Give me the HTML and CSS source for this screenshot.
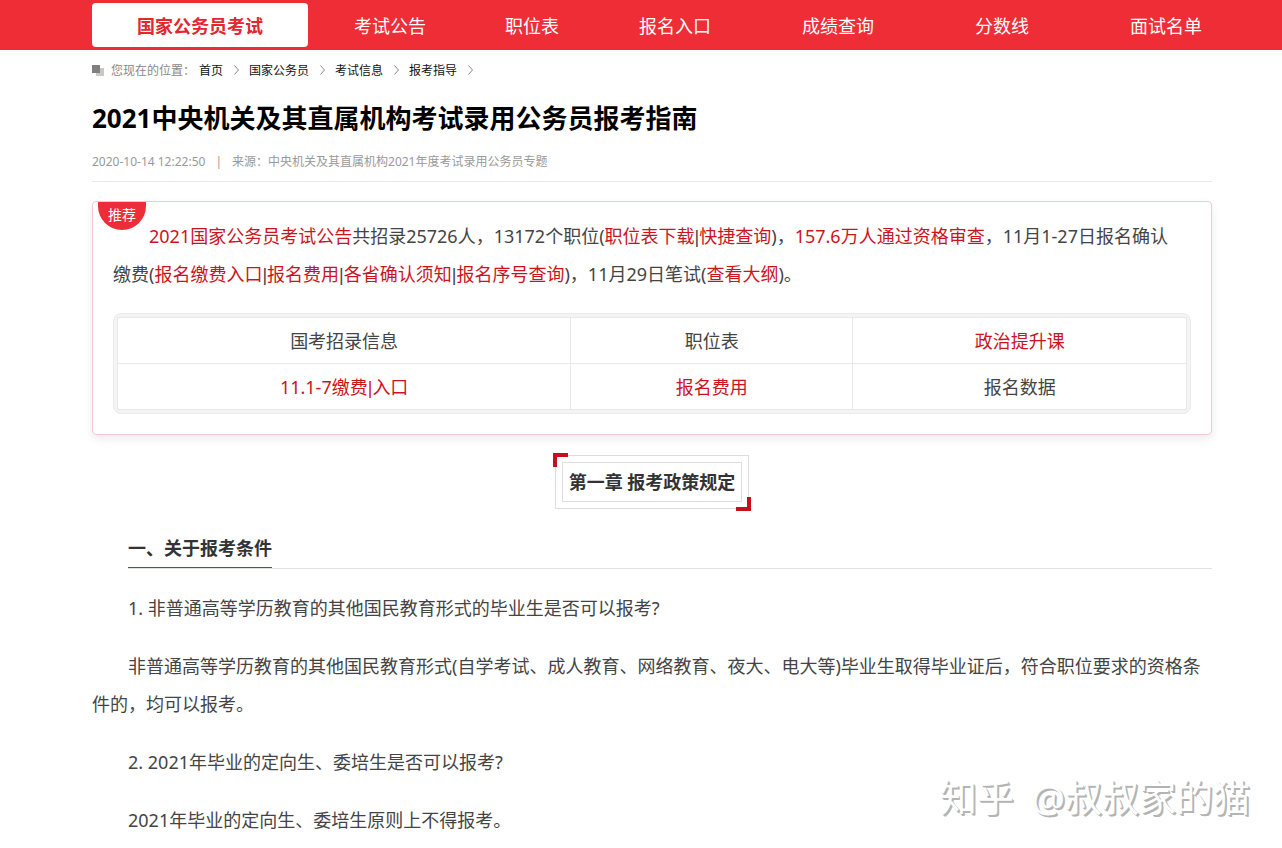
FILE: index.html
```html
<!DOCTYPE html>
<html lang="zh-CN">
<head>
<meta charset="utf-8">
<title>2021中央机关及其直属机构考试录用公务员报考指南</title>
<link rel="stylesheet" href="styles.css">
</head>
<body>
<header class="topbar">
  <nav class="nav">
    <a class="nav-current" href="#">国家公务员考试</a>
    <div class="nav-links">
      <a href="#">考试公告</a>
      <a href="#">职位表</a>
      <a href="#">报名入口</a>
      <a href="#">成绩查询</a>
      <a href="#">分数线</a>
      <a href="#">面试名单</a>
    </div>
  </nav>
</header>
<main class="page">
  <div class="crumbs">
    <svg class="crumb-icon" viewBox="0 0 12 11" aria-hidden="true"><rect x="4" y="3" width="8" height="8" fill="#c8c8c8"/><rect width="8" height="8" fill="#808080"/></svg>
    <span class="crumb-label">您现在的位置：</span>
    <a href="#">首页</a>
    <svg class="chevron" viewBox="0 0 5 10" aria-hidden="true"><path d="M.5 .5 4.5 5 .5 9.5"/></svg>
    <a href="#">国家公务员</a>
    <svg class="chevron" viewBox="0 0 5 10" aria-hidden="true"><path d="M.5 .5 4.5 5 .5 9.5"/></svg>
    <a href="#">考试信息</a>
    <svg class="chevron" viewBox="0 0 5 10" aria-hidden="true"><path d="M.5 .5 4.5 5 .5 9.5"/></svg>
    <a href="#">报考指导</a>
    <svg class="chevron" viewBox="0 0 5 10" aria-hidden="true"><path d="M.5 .5 4.5 5 .5 9.5"/></svg>
  </div>
  <h1 class="title">2021中央机关及其直属机构考试录用公务员报考指南</h1>
  <div class="meta"><span>2020-10-14 12:22:50</span><span>|</span><span>来源：中央机关及其直属机构2021年度考试录用公务员专题</span></div>

  <section class="promo">
    <span class="badge">推荐</span>
    <p class="text"><a href="#">2021国家公务员考试公告</a>共招录25726人，13172个职位(<a href="#">职位表下载</a><span class="bar">|</span><a href="#">快捷查询</a>)，<a href="#">157.6万人通过资格审查</a>，11月1-27日报名确认<span class="keep">缴费(</span><a href="#">报名缴费入口</a><span class="bar">|</span><a href="#">报名费用</a><span class="bar">|</span><a href="#">各省确认须知</a><span class="bar">|</span><a href="#">报名序号查询</a>)，11月29日笔试(<a href="#">查看大纲</a>)。</p>
    <div class="table-frame">
      <table class="info">
        <colgroup><col class="col-a"><col class="col-b"><col class="col-c"></colgroup>
        <tr><td>国考招录信息</td><td>职位表</td><td><a href="#">政治提升课</a></td></tr>
        <tr><td><a href="#">11.1-7缴费<span class="bar">|</span>入口</a></td><td><a href="#">报名费用</a></td><td>报名数据</td></tr>
      </table>
    </div>
  </section>

  <div class="chapter"><h2 class="chapter-name">第一章 报考政策规定</h2></div>
  <div class="section-head"><h3 class="section-name">一、关于报考条件</h3></div>

  <p class="text">1. 非普通高等学历教育的其他国民教育形式的毕业生是否可以报考?</p>
  <p class="text">非普通高等学历教育的其他国民教育形式(自学考试、成人教育、网络教育、夜大、电大等)毕业生取得毕业证后，符合职位要求的资格条件的，均可以报考。</p>
  <p class="text">2. 2021年毕业的定向生、委培生是否可以报考?</p>
  <p class="text">2021年毕业的定向生、委培生原则上不得报考。</p>
  <div class="watermark"><span>知乎</span><span>@叔叔家的猫</span></div>
</main>
</body>
</html>
```
FILE: styles.css
```css
*, *::before, *::after { box-sizing: border-box; }
body {
  margin: 0;
  background: #fff;
  color: #444;
  font-family: "Noto Sans", "Noto Sans CJK SC", sans-serif;
  font-size: 18px;
  font-weight: 400;
}
a { color: inherit; text-decoration: none; }
h1, h2, h3, p { margin: 0; }
h2, h3 { color: #333; }
.bar { font-family: "Liberation Sans", sans-serif; line-height: 1; }
.keep { white-space: nowrap; }

.topbar { background: #ef2d36; padding: 3px 70px 3px 92px; }
.nav { display: flex; height: 44px; line-height: 46px; color: #fff; }
.nav-current {
  flex: none;
  width: 216px;
  border-radius: 4px;
  background: #fff;
  color: #e3262f;
  font-weight: 700;
  text-align: center;
}
.nav-links {
  flex: 1;
  display: grid;
  grid-template-columns: 151fr 134fr 163fr 173fr 155fr 82fr;
  padding-left: 46px;
  white-space: nowrap;
}

.page { position: relative; padding: 0 70px 9px 92px; }
.crumbs { display: flex; align-items: center; height: 40px; font-size: 12px; color: #111; }
.crumb-icon { width: 12px; height: 11px; margin-right: 7px; }
.crumb-label { margin-right: 4px; color: #888; }
.chevron { width: 5px; height: 10px; margin: 0 10px 0 11px; fill: none; stroke: #888; }
.title { color: #000; font-size: 26px; line-height: 56px; font-weight: 700; }
.meta {
  display: flex;
  gap: 10px;
  padding: 2px 0 6px;
  border-bottom: 1px solid #e8e8e8;
  color: #999;
  font-size: 12px;
  line-height: 27px;
}
.text { line-height: 38px; margin-bottom: 20px; text-indent: 36px; }
.text a, .info a { color: #cc141e; }

.promo {
  position: relative;
  margin: 19px 0 20px;
  padding: 15px 20px 20px;
  border: 1px solid #f3c8ce;
  border-radius: 4px;
  box-shadow: 0 4px 8px #ececec;
}
.badge {
  position: absolute;
  top: 0;
  left: 5px;
  width: 48px;
  height: 28px;
  border-radius: 0 0 24px 24px;
  background: #ef2d36;
  color: #fff;
  font-size: 14px;
  line-height: 26px;
  text-align: center;
}
.table-frame { border: 1px solid #ebebeb; border-radius: 8px; background: #f4f4f4; padding: 3px; }
.info { width: 100%; table-layout: fixed; border-collapse: collapse; background: #fff; }
.info td { height: 46px; padding: 0 0 2px; border: 1px solid #e8e8e8; text-align: center; }
.col-a { width: 42.4%; }
.col-b { width: 26.4%; }
.col-c { width: 31.2%; }

.chapter {
  position: relative;
  width: fit-content;
  margin: 0 auto 20px;
  padding: 6px;
  border: 1px solid #ddd;
}
.chapter-name { padding: 0 6px; border: 1px solid #ddd; font-size: 18px; line-height: 38px; }
.chapter::before, .chapter::after { content: ""; position: absolute; width: 15px; height: 14px; border: solid #c7101f; }
.chapter::before { top: -3px; left: -3px; border-width: 4px 0 0 4px; }
.chapter::after { right: -3px; bottom: -3px; border-width: 0 4px 4px 0; }

.section-head { margin: 0 0 20px 36px; border-bottom: 1px solid #e2e2e2; }
.section-name {
  width: fit-content;
  border-bottom: 1px solid #d0202c;
  font-size: 18px;
  line-height: 38px;
}
.page > .text:nth-last-child(2) { margin-bottom: 0; }
.watermark {
  position: absolute;
  right: 32px;
  bottom: 20px;
  display: flex;
  gap: 18px;
  color: #fff;
  font-size: 37px;
  line-height: 60px;
  text-shadow: 1px 1px #b4b4b4, 2px 2px #b4b4b4;
}
```
